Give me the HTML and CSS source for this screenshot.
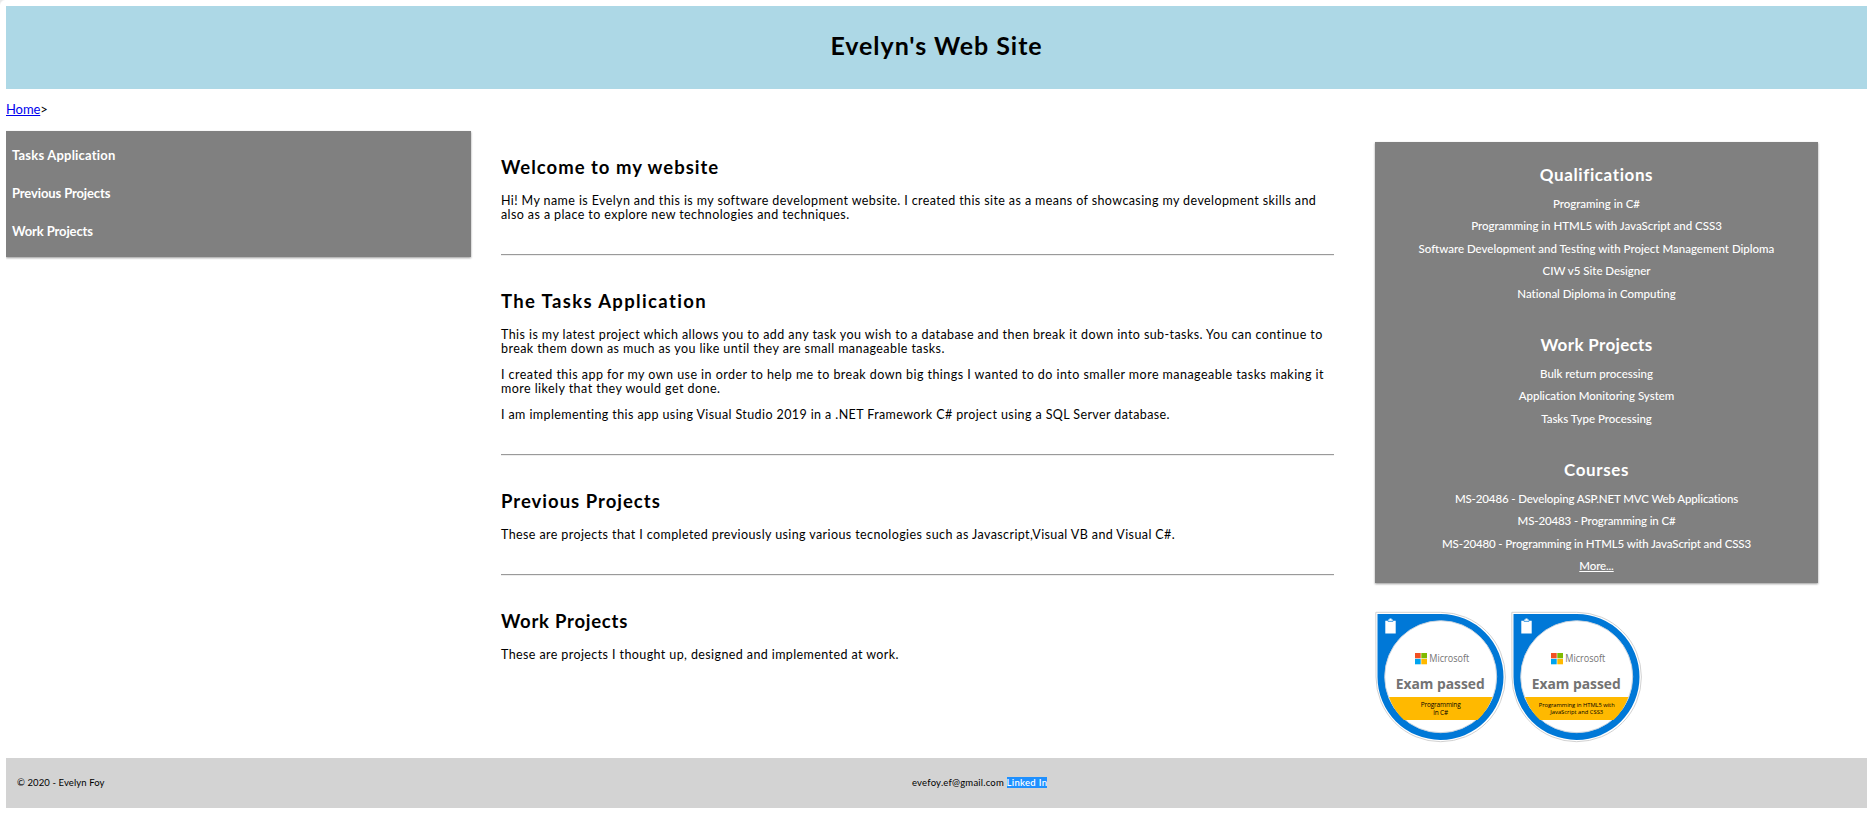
FILE: index.html
```html
<!DOCTYPE html>
<html lang="en">
<head>
<meta charset="utf-8">
<title>Evelyn's Web Site</title>
<link rel="stylesheet" href="styles.css">
</head>
<body>
<header class="banner"><h1>Evelyn's Web Site</h1></header>
<div class="crumbs"><a href="#">Home</a>&gt;</div>
<div class="columns">
  <nav class="menu">
    <a class="wide">Tasks Application</a>
    <a>Previous Projects</a>
    <a>Work Projects</a>
  </nav>
  <main class="content">
    <section>
      <h2>Welcome to my website</h2>
      <p class="intro">Hi! My name is Evelyn and this is my software development website. I created this site as a means of showcasing my development skills and<br>also as a place to explore new technologies and techniques.</p>
    </section>
    <hr>
    <section>
      <h2 class="wide">The Tasks Application</h2>
      <p class="latest">This is my latest project which allows you to add any task you wish to a database and then break it down into sub-tasks. You can continue to<br>break them down as much as you like until they are small manageable tasks.</p>
      <p class="reason">I created this app for my own use in order to help me to break down big things I wanted to do into smaller more manageable tasks making it<br>more likely that they would get done.</p>
      <p>I am implementing this app using Visual Studio 2019 in a .NET Framework C# project using a SQL Server database.</p>
    </section>
    <hr>
    <section>
      <h2>Previous Projects</h2>
      <p>These are projects that I completed previously using various tecnologies such as Javascript,Visual VB and Visual C#.</p>
    </section>
    <hr>
    <section>
      <h2 class="tight">Work Projects</h2>
      <p>These are projects I thought up, designed and implemented at work.</p>
    </section>
  </main>
  <aside class="side">
    <div class="card">
      <h3 class="wide">Qualifications</h3>
      <ul>
        <li>Programing in C#</li>
        <li>Programming in HTML5 with JavaScript and CSS3</li>
        <li class="diploma">Software Development and Testing with Project Management Diploma</li>
        <li>CIW v5 Site Designer</li>
        <li>National Diploma in Computing</li>
      </ul>
      <h3>Work Projects</h3>
      <ul>
        <li>Bulk return processing</li>
        <li>Application Monitoring System</li>
        <li>Tasks Type Processing</li>
      </ul>
      <h3 class="wide">Courses</h3>
      <ul class="courses">
        <li>MS-20486 - Developing ASP.NET MVC Web Applications</li>
        <li>MS-20483 - Programming in C#</li>
        <li>MS-20480 - Programming in HTML5 with JavaScript and CSS3</li>
        <li><u>More...</u></li>
      </ul>
    </div>
    <div class="badges">
      <svg width="136" height="136" viewBox="0 0 136 136">
        <defs>
          <g id="badge">
            <path d="M.8 2.3H65.700a64.700 64.700 0 1 1-64.700 64.700z" fill="#fff" stroke="#d2d2d2" stroke-width="1"/>
            <path d="M2.500 3.900H65.700a63 63 0 1 1-63.200 63z" fill="#0078d7"/>
            <circle cx="65.700" cy="66.700" r="56" fill="#fff" stroke="#c9d3dc" stroke-width=".9"/>
            <path d="M14 87H117.400A56 56 0 0 1 102.500 110H28.900A56 56 0 0 1 14 87z" fill="#ffb900"/>
            <path d="M10.300 10.800h3v-1.300h1.200v-1h2v1h1.200v1.300h3v12.700h-10.400z" fill="#fff"/>
            <path d="M12.800 11.300h5.400" stroke="#0078d7" stroke-width=".8"/>
            <path d="M40 43h5.700v5.300H40z" fill="#f25022"/>
            <path d="M46.300 43H52v5.300h-5.700z" fill="#7fba00"/>
            <path d="M40 48.900h5.700v5.400H40z" fill="#00a4ef"/>
            <path d="M46.300 48.900H52v5.400h-5.700z" fill="#ffb900"/>
            <text x="54.300" y="52" class="brand" textLength="40" lengthAdjust="spacingAndGlyphs">Microsoft</text>
            <text x="65.200" y="78.700" class="passed" textLength="89" lengthAdjust="spacingAndGlyphs">Exam passed</text>
          </g>
        </defs>
        <use href="#badge"/>
        <text x="65.700" y="96.500" class="exam" textLength="40">Programming</text>
        <text x="65.700" y="104.500" class="exam" textLength="15">in C#</text>
      </svg>
      <svg width="136" height="136" viewBox="0 0 136 136">
        <use href="#badge"/>
        <text x="65.700" y="96.500" class="exam small" textLength="76">Programming in HTML5 with</text>
        <text x="65.700" y="104" class="exam small" textLength="53">JavaScript and CSS3</text>
      </svg>
    </div>
  </aside>
</div>
<footer class="footer">
  <span class="copy">© 2020 - Evelyn Foy</span>
  <span class="contact"><span class="mail">evefoy.ef@gmail.com</span> <a>Linked In</a></span>
</footer>
</body>
</html>
```
FILE: styles.css
```css
body {
  margin: 0 0 0 6px;
  padding-top: 6px;
  background: #fff;
  color: #000;
  font: 12.5px/14px Lato, "Noto Sans", sans-serif;
  letter-spacing: .4px;
}
body::before {
  content: "";
  position: absolute;
  left: 0;
  top: 0;
  width: 6px;
  height: 6px;
  background: radial-gradient(circle at 100% 100%, #fff 5.5px, #e9e9e9 7px);
}
h1, h2, h3, p, ul { margin: 0; padding: 0; }
ul { list-style: none; }
.banner { height: 83px; background: #add8e6; text-align: center; }
h1 { padding-top: 22px; font-size: 25px; line-height: 34px; letter-spacing: .95px; }
.crumbs { height: 42px; padding-top: 13px; box-sizing: border-box; font-size: 13px; letter-spacing: -.1px; }
.crumbs a { color: #00e; text-decoration: underline; }
.columns { display: flex; align-items: flex-start; height: 627px; }
.menu {
  display: flex;
  flex-direction: column;
  gap: 24px;
  width: 465px;
  height: 126px;
  box-sizing: border-box;
  padding: 17px 6px;
  background: #808080;
  color: #fff;
  font-size: 13px;
  font-weight: 700;
  letter-spacing: -.12px;
  box-shadow: 0 1px 2px rgba(0, 0, 0, .4);
}
.menu .wide { letter-spacing: .2px; }
.content { width: 833px; margin-left: 30px; padding-top: 24px; white-space: nowrap; }
h2 { margin-bottom: 15px; font-size: 18.5px; line-height: 24px; letter-spacing: 1px; }
h2.wide { letter-spacing: 1.35px; }
h2.tight { letter-spacing: .75px; }
p + p { margin-top: 12px; }
.latest { letter-spacing: .42px; }
.reason { letter-spacing: .45px; }
hr { height: 0; margin: 32px 0 33px; border: 0; border-top: 1px solid #9a9a9a; border-bottom: 1px solid #eee; }
.side { width: 443px; margin: 11px 0 0 41px; }
.card {
  height: 441px;
  box-sizing: border-box;
  padding-top: 22px;
  background: #808080;
  color: #fff;
  text-align: center;
  font-size: 11.5px;
  font-weight: 500;
  line-height: 22.5px;
  letter-spacing: -.02px;
  box-shadow: 0 1px 2px rgba(0, 0, 0, .4);
}
.card h3 { margin-bottom: 6.5px; font-size: 17px; line-height: 22px; letter-spacing: .33px; }
.card h3.wide { letter-spacing: .6px; }
.card ul + h3 { margin-top: 29px; }
.card .diploma { letter-spacing: 0; }
.card .courses { letter-spacing: -.13px; }
.badges { display: flex; margin-top: 27px; letter-spacing: 0; }
.brand { font: 11px "Open Sans", sans-serif; fill: #737373; }
.passed { font: 700 14.5px "Open Sans", sans-serif; fill: #737373; text-anchor: middle; }
.exam { font: 6.500px "Open Sans", sans-serif; fill: #000; text-anchor: middle; }
.exam.small { font-size: 5.800px; }
.footer {
  display: grid;
  grid-template-columns: 895px 1fr;
  height: 50px;
  box-sizing: border-box;
  padding: 18px 11px 0;
  background: #d3d3d3;
  font-size: 9.500px;
  letter-spacing: .09px;
}
.mail { letter-spacing: .21px; }
.contact a { background: #1e90ff; color: #fff; font-weight: 600; letter-spacing: .3px; }
```
